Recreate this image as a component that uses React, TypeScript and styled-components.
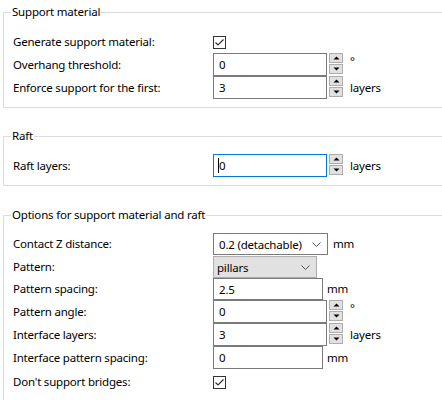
import styled, { createGlobalStyle } from 'styled-components';

const GlobalStyle = createGlobalStyle`
  html, body {
    margin: 0;
    padding: 0;
    background: #fff;
    overflow: hidden;
  }
  body {
    font-family: "Segoe UI", "Noto Sans", "Open Sans", sans-serif;
    font-size: 11.5px;
    letter-spacing: -0.2px;
    color: #000;
  }
`;

function Check() {
  return (
    <CheckBox>
      <svg width="11" height="11" viewBox="0 0 11 11">
        <polyline points="1.5,5.5 4,8 9.5,2.5" fill="none" stroke="#333" strokeWidth="1.2" />
      </svg>
    </CheckBox>
  );
}

function Spin({ value, unit, focused }: { value: string; unit: string; focused?: boolean }) {
  return (
    <Controls>
      <FieldWrap>
        <TextField readOnly value={value} $width={114} $focused={focused} />
        {focused && <Caret />}
      </FieldWrap>
      <Spinner>
        <SpinButton>
          <svg width="7" height="4" viewBox="0 0 7 4">
            <polygon points="0.5,3.5 3.5,0.5 6.5,3.5" fill="#000" />
          </svg>
        </SpinButton>
        <SpinButton>
          <svg width="7" height="4" viewBox="0 0 7 4">
            <polygon points="0.5,0.5 3.5,3.5 6.5,0.5" fill="#000" />
          </svg>
        </SpinButton>
      </Spinner>
      <Unit $gap={7} $raised={unit === '°'}>{unit}</Unit>
    </Controls>
  );
}

function Combo({ value, width, flat }: { value: string; width: number; flat?: boolean }) {
  return (
    <ComboBox $width={width} $flat={flat}>
      <span>{value}</span>
      <svg width="9" height="5" viewBox="0 0 9 5">
        <polyline points="0.5,0.5 4.5,4.5 8.5,0.5" fill="none" stroke="#555" strokeWidth="1" />
      </svg>
    </ComboBox>
  );
}

function App() {
  return (
    <>
      <GlobalStyle />
      <Page>
        <Frame>
          <Legend>Support material</Legend>
          <Row>
            <Label>Generate support material:</Label>
            <Controls>
              <Check />
            </Controls>
          </Row>
          <Row>
            <Label>Overhang threshold:</Label>
            <Spin value="0" unit="°" />
          </Row>
          <Row>
            <Label>Enforce support for the first:</Label>
            <Spin value="3" unit="layers" />
          </Row>
        </Frame>

        <Frame $gap={20}>
          <Legend>Raft</Legend>
          <Row>
            <Label>Raft layers:</Label>
            <Spin value="0" unit="layers" focused />
          </Row>
        </Frame>

        <Frame $gap={21} $padTop={9}>
          <Legend>Options for support material and raft</Legend>
          <Row>
            <Label>Contact Z distance:</Label>
            <Controls>
              <Combo value="0.2 (detachable)" width={115} />
              <Unit $gap={5}>mm</Unit>
            </Controls>
          </Row>
          <Row>
            <Label>Pattern:</Label>
            <Controls>
              <Combo value="pillars" width={104} flat />
            </Controls>
          </Row>
          <Row $h={22}>
            <Label>Pattern spacing:</Label>
            <Controls>
              <TextField readOnly value="2.5" $width={110} $height={22} />
              <Unit $gap={4}>mm</Unit>
            </Controls>
          </Row>
          <Row>
            <Label>Pattern angle:</Label>
            <Spin value="0" unit="°" />
          </Row>
          <Row>
            <Label>Interface layers:</Label>
            <Spin value="3" unit="layers" />
          </Row>
          <Row>
            <Label>Interface pattern spacing:</Label>
            <Controls>
              <TextField readOnly value="0" $width={110} />
              <Unit $gap={4}>mm</Unit>
            </Controls>
          </Row>
          <Row $h={26}>
            <Label>Don't support bridges:</Label>
            <Controls>
              <Check />
            </Controls>
          </Row>
        </Frame>
      </Page>
    </>
  );
}

const Page = styled.div`
  padding-top: 4px;
`;

const Frame = styled.fieldset<{ $gap?: number; $padTop?: number }>`
  margin: ${p => p.$gap ?? 0}px 0 0 3px;
  padding: ${p => p.$padTop ?? 10}px 0 8px 7px;
  border: 1px solid #dcdcdc;
  border-right: none;
  min-width: 0;
`;

const Legend = styled.legend`
  padding: 0 1px;
  line-height: 16px;
`;

const Row = styled.div<{ $h?: number }>`
  display: grid;
  grid-template-columns: 200px auto;
  align-items: center;
  height: ${p => p.$h ?? 23}px;
  padding-left: 2px;
`;

const Label = styled.span`
  white-space: nowrap;
  line-height: 16px;
`;

const Controls = styled.div`
  display: flex;
  align-items: center;
  height: 100%;
`;

const CheckBox = styled.span`
  display: flex;
  align-items: center;
  justify-content: center;
  width: 13px;
  height: 13px;
  box-sizing: border-box;
  border: 1px solid #333;
  background: #fff;
  margin-top: 1px;
`;

const FieldWrap = styled.div`
  position: relative;
  display: flex;
`;

const TextField = styled.input<{ $width: number; $height?: number; $focused?: boolean }>`
  box-sizing: border-box;
  width: ${p => p.$width}px;
  height: ${p => p.$height ?? 23}px;
  margin: 0;
  padding: 0 0 0 5px;
  border: 1px solid ${p => (p.$focused ? '#0078d7' : '#7a7a7a')};
  border-radius: 0;
  outline: none;
  background: #fff;
  font: inherit;
  letter-spacing: inherit;
  color: #000;
`;

const Caret = styled.span`
  position: absolute;
  left: 5px;
  top: 4px;
  width: 1px;
  height: 15px;
  background: #000;
`;

const Spinner = styled.div`
  display: flex;
  flex-direction: column;
  gap: 1px;
  align-self: flex-start;
  margin: 0 0 0 2px;
`;

const SpinButton = styled.span`
  display: flex;
  align-items: center;
  justify-content: center;
  box-sizing: border-box;
  width: 14px;
  height: 10px;
  background: #e1e1e1;
  border: 1px solid #adadad;
`;

const Unit = styled.span<{ $gap: number; $raised?: boolean }>`
  margin-left: ${p => p.$gap}px;
  line-height: 16px;
  align-self: ${p => (p.$raised ? 'flex-start' : 'center')};
`;

const ComboBox = styled.div<{ $width: number; $flat?: boolean }>`
  display: flex;
  align-items: center;
  justify-content: space-between;
  box-sizing: border-box;
  width: ${p => p.$width}px;
  height: 22px;
  margin-top: 1px;
  padding: 0 6px 0 ${p => (p.$flat ? 3 : 5)}px;
  border: 1px solid ${p => (p.$flat ? '#adadad' : '#7a7a7a')};
  background: ${p => (p.$flat ? '#e1e1e1' : '#fff')};
  white-space: nowrap;
`;

export default App;
